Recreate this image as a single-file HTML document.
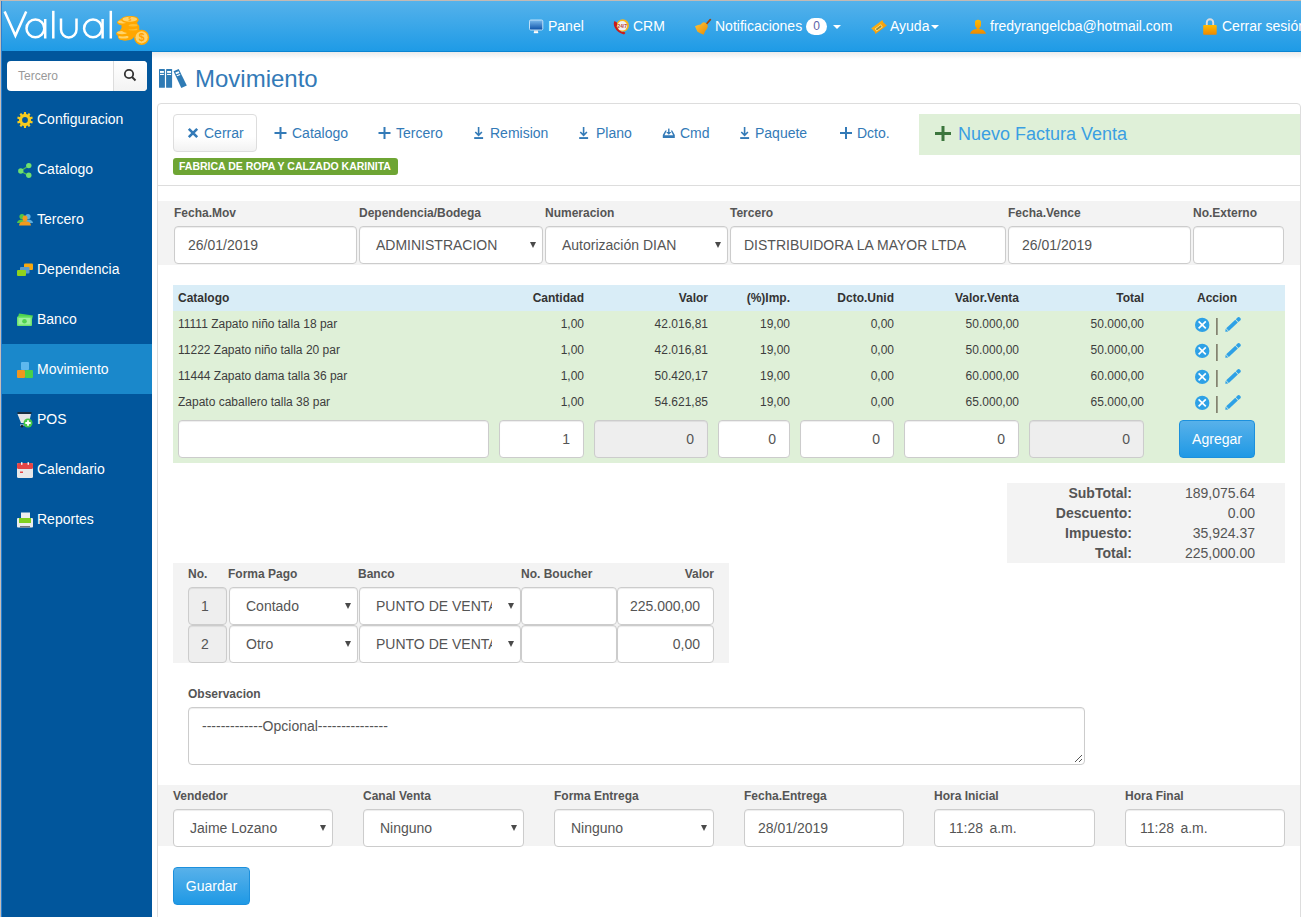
<!DOCTYPE html>
<html><head><meta charset="utf-8">
<style>
*{box-sizing:border-box;margin:0;padding:0}
html,body{width:1301px;height:917px;overflow:hidden;background:#fff}
body{position:relative;font-family:"Liberation Sans",sans-serif;color:#333;font-size:14px}
.a{position:absolute}
#hdr{left:0;top:0;width:1301px;height:52px;background:linear-gradient(#55b2eb,#1f9be6);border-top:1px solid #c4bab4;border-bottom:1px solid #0b85d2}
#side{left:2px;top:51px;width:150px;height:866px;background:#01569c}
.nav{position:absolute;top:18px;color:#fff;font-size:14px;white-space:nowrap;line-height:16px}
.si{position:absolute;left:0;width:150px;height:50px;color:#fff;font-size:14px}
.si span{position:absolute;left:35px;top:17px;line-height:16px}
.si svg{position:absolute;left:15px;top:18px}
.lbl{position:absolute;font-size:12px;font-weight:bold;color:#555;line-height:14px;white-space:nowrap}
.inp{position:absolute;height:38px;border:1px solid #ccc;border-radius:4px;background:#fff;font-size:14px;color:#555;line-height:36px;padding-left:13px;white-space:nowrap;overflow:hidden;box-shadow:inset 0 1px 1px rgba(0,0,0,.075)}
.sel:after{content:"";position:absolute;right:6px;top:15px;border-left:3.5px solid transparent;border-right:3.5px solid transparent;border-top:6px solid #4a4a4a}
.r{text-align:right;padding-right:13px;padding-left:0}
.dis{background:#eee}
.tb{position:absolute;top:125px;color:#337ab7;font-size:14px;line-height:16px;white-space:nowrap}
.td{position:absolute;font-size:12px;color:#3d3d3d;line-height:14px;white-space:nowrap}
.th{position:absolute;font-size:12px;font-weight:bold;color:#333;line-height:14px;white-space:nowrap}
</style></head><body>
<!-- header -->
<div id="hdr" class="a"></div>
<div class="a" style="left:0;top:1px;width:1px;height:916px;background:#c8beb8"></div>
<div class="a" style="left:1px;top:1px;width:1px;height:916px;background:#2a80d2"></div>
<!-- logo -->
<svg class="a" style="left:0;top:0" width="152" height="51" viewBox="0 0 152 51">
 <g fill="none" stroke="#fff" stroke-width="2.5">
  <polyline points="4.6,11.5 15.4,35.6 26.2,11.5" stroke-linejoin="miter"/>
  <circle cx="35.4" cy="28.4" r="8.9"/>
  <line x1="45.2" y1="19" x2="45.2" y2="38.5"/>
  <line x1="53.3" y1="10.8" x2="53.3" y2="38.5"/>
  <path d="M61,18.5 V29.5 A7.75,8 0 0 0 76.5,29.5 V18.5"/>
  <circle cx="93" cy="28.4" r="8.9"/>
  <line x1="102.6" y1="19" x2="102.6" y2="38.5"/>
  <line x1="110.8" y1="10.8" x2="110.8" y2="38.5"/>
 </g>
 <g><polygon points="118,37 117,33 120,30.5 121.5,28 121.8,24.5 117,22.5 120,19.5 124,17.5 130,16 137,17 138.6,20 137,23 139.2,26.5 139.4,31 136,35 132,39 125,40.5 119.5,39.5" fill="#ffa700"/><ellipse cx="125.5" cy="37.8" rx="7.3" ry="2.8" fill="#ffa700"/><ellipse cx="123.5" cy="37.0" rx="5" ry="1.5" fill="#ffd36a"/><ellipse cx="122.8" cy="33.5" rx="6.8" ry="3" fill="#ffa700"/><ellipse cx="122.0" cy="32.6" rx="5" ry="1.6" fill="#ffd36a"/><ellipse cx="130.5" cy="30.0" rx="8.8" ry="3.2" fill="#ffa700"/><ellipse cx="133.0" cy="29.3" rx="4.5" ry="1.2" fill="#ffbf30"/><ellipse cx="130.5" cy="26.2" rx="8.8" ry="3.2" fill="#ffa700"/><ellipse cx="133.0" cy="25.3" rx="4.5" ry="1.2" fill="#ffbf30"/><ellipse cx="124.3" cy="22.5" rx="7.2" ry="3.2" fill="#ffa700"/><ellipse cx="122.5" cy="21.8" rx="4.5" ry="1.6" fill="#ffd36a"/><ellipse cx="129.8" cy="19.6" rx="8.8" ry="3.6" fill="#ffa700"/><ellipse cx="129.8" cy="19.2" rx="7.3" ry="2.5" fill="#ffd36a"/><circle cx="141.6" cy="37.3" r="7.6" fill="#ffa700"/><circle cx="141.6" cy="37.3" r="6.1" fill="#ffd36a"/><text x="141.6" y="41.2" font-size="10.5" font-weight="bold" fill="#ffa000" text-anchor="middle" font-family="Liberation Sans">$</text><text x="129.8" y="21.3" font-size="5" font-weight="bold" fill="#ffa000" text-anchor="middle" font-family="Liberation Sans">$</text></g>
</svg>
<!-- nav -->
<svg class="a" style="left:525px;top:14px" width="22" height="24" viewBox="0 0 22 24"><defs><linearGradient id="scr" x1="0" y1="0" x2="0" y2="1"><stop offset="0" stop-color="#7cbcef"/><stop offset="1" stop-color="#0a4ea6"/></linearGradient></defs><rect x="4.5" y="6" width="13.3" height="10" rx="1.2" fill="url(#scr)" stroke="#bfe0f8" stroke-width="1"/><rect x="9" y="16.5" width="4" height="1.8" fill="#e8e8e8"/><rect x="8.8" y="18" width="4.4" height="1.2" fill="#fff"/></svg>
<div class="nav" style="left:548px">Panel</div>
<svg class="a" style="left:608px;top:14px" width="26" height="24" viewBox="0 0 26 24"><circle cx="14.7" cy="11.5" r="6.2" fill="#f7b51a"/><circle cx="14.3" cy="11.8" r="4.8" fill="#eef2f6"/><text x="14.2" y="13.6" font-size="4.8" font-weight="bold" fill="#c0392b" text-anchor="middle" font-family="Liberation Sans">24/7</text><path d="M6.5,7 Q5,9 6.5,13 Q9,18.5 16,20.5 L17.5,19 Q16,17 14,18 Q10,16 8.5,12.5 Q9.5,10.5 9,8.5 Z" fill="#cc1a1a"/></svg>
<div class="nav" style="left:633px">CRM</div>
<svg class="a" style="left:690px;top:14px" width="26" height="24" viewBox="0 0 26 24"><defs><linearGradient id="bel" x1="0" y1="0" x2="1" y2="1"><stop offset="0" stop-color="#ffc53a"/><stop offset="1" stop-color="#e78a00"/></linearGradient></defs><path d="M16.5,10 L20.3,5.6" stroke="#9b4510" stroke-width="1.8" stroke-linecap="round"/><path d="M5,12.3 Q8,10.5 10.8,10.5 Q12.5,8 14.2,8.3 Q17.5,9.5 17.8,12.5 Q17.5,15 15.2,17 Q14.5,19 13.7,20.7 Q10,19.5 7.5,17.8 Q6,15 5,12.3Z" fill="url(#bel)"/></svg>
<div class="nav" style="left:715px">Notificaciones</div>
<div class="a" style="left:806px;top:18px;width:21px;height:17px;border-radius:9px;background:#fff;color:#5b62a8;font-size:12px;text-align:center;line-height:17px">0</div>
<div class="a" style="left:833px;top:25px;border-left:4px solid transparent;border-right:4px solid transparent;border-top:4px solid #fff"></div>
<svg class="a" style="left:866px;top:14px" width="26" height="24" viewBox="0 0 26 24"><defs><linearGradient id="tkt" x1="0" y1="0" x2="1" y2="1"><stop offset="0" stop-color="#ffbe1a"/><stop offset="1" stop-color="#f08c00"/></linearGradient></defs><path d="M5.1,14.5 L16.5,5.9 Q16.6,8.2 18.3,9.2 Q19.5,10.8 20.9,11.4 L9.4,19.9 Q9.3,17.8 7.5,16.7 Q6.5,15 5.1,14.5Z" fill="url(#tkt)"/><path d="M8.7,14.8 L14.8,10.2 L16.8,13 L10.7,17.6Z" fill="#ffe680"/><path d="M9.8,14.9 L14.6,11.3 L15.7,12.8 L10.9,16.4Z" fill="#9c8a3a"/></svg>
<div class="nav" style="left:890px">Ayuda</div>
<div class="a" style="left:931px;top:25px;border-left:4.5px solid transparent;border-right:4.5px solid transparent;border-top:4px solid #fff"></div>
<svg class="a" style="left:966px;top:12px" width="24" height="26" viewBox="0 0 24 26"><defs><linearGradient id="usr" x1="0" y1="0" x2="0" y2="1"><stop offset="0" stop-color="#ffbb00"/><stop offset="1" stop-color="#ee8a00"/></linearGradient></defs><path d="M9,10.5 Q8.8,7.8 12,7.8 Q15.2,7.8 15,10.5 L15,13.5 Q14.5,15.3 13.3,16.2 L13.3,17 Q19,17.5 20,21.8 L4,21.8 Q5,17.5 10.7,17 L10.7,16.2 Q9.5,15.3 9,13.5Z" fill="url(#usr)"/></svg>
<div class="nav" style="left:990px">fredyrangelcba@hotmail.com</div>
<svg class="a" style="left:1198px;top:12px" width="24" height="26" viewBox="0 0 24 26"><defs><linearGradient id="lck" x1="0" y1="0" x2="0" y2="1"><stop offset="0" stop-color="#ffbb00"/><stop offset="1" stop-color="#ee8800"/></linearGradient></defs><path d="M8.8,13.5 V10.5 A3.2,3.2 0 0 1 15.2,10.5 V13.5" fill="none" stroke="#dcdcdc" stroke-width="1.9"/><rect x="5.2" y="13" width="13.5" height="9.8" rx="0.8" fill="url(#lck)"/></svg>
<div class="nav" style="left:1222px">Cerrar sesión</div>

<!-- sidebar -->
<div id="side" class="a"></div>
<div class="a" style="left:7px;top:61px;width:140px;height:30px;background:#fff;border-radius:4px"></div>
<div class="a" style="left:113px;top:61px;width:34px;height:30px;border-left:1px solid #ddd;border-radius:0 4px 4px 0;background:linear-gradient(#fff,#f3f3f3)"></div>
<div class="a" style="left:18px;top:69px;font-size:12px;color:#999;line-height:14px">Tercero</div>
<svg class="a" style="left:123px;top:68px" width="14" height="14" viewBox="0 0 14 14"><circle cx="6" cy="6" r="4.2" fill="none" stroke="#333" stroke-width="1.8"/><line x1="9" y1="9" x2="12.5" y2="12.5" stroke="#333" stroke-width="2"/></svg>

<div class="a" style="left:2px;top:94px;width:150px;height:500px">
 <div class="si" style="top:0"><svg width="16" height="16" viewBox="0 0 16 16"><path fill="#f6cb1e" d="M6.80,2.12 L7.00,0.06 L9.00,0.06 L9.20,2.12 L10.49,2.54 L11.85,0.99 L13.48,2.17 L12.43,3.95 L13.22,5.04 L15.24,4.59 L15.86,6.50 L13.96,7.32 L13.96,8.68 L15.86,9.50 L15.24,11.41 L13.22,10.96 L12.43,12.05 L13.48,13.83 L11.85,15.01 L10.49,13.46 L9.20,13.88 L9.00,15.94 L7.00,15.94 L6.80,13.88 L5.51,13.46 L4.15,15.01 L2.52,13.83 L3.57,12.05 L2.78,10.96 L0.76,11.41 L0.14,9.50 L2.04,8.68 L2.04,7.32 L0.14,6.50 L0.76,4.59 L2.78,5.04 L3.57,3.95 L2.52,2.17 L4.15,0.99 L5.51,2.54Z"/><circle cx="8" cy="8" r="2.9" fill="#01569c"/></svg><span>Configuracion</span></div>
 <div class="si" style="top:50px"><svg width="16" height="16" viewBox="0 0 16 16"><path d="M3.5,9 L11.5,4 M3.5,9 L11.5,13.5" stroke="#4cc24c" stroke-width="1.2"/><circle cx="3.8" cy="9" r="2.7" fill="#6ee06e"/><circle cx="11.8" cy="3.6" r="2.7" fill="#6ee06e"/><circle cx="11.8" cy="13.3" r="2.7" fill="#6ee06e"/></svg><span>Catalogo</span></div>
 <div class="si" style="top:100px"><svg width="16" height="17" viewBox="0 -1 16 17"><circle cx="5" cy="3.5" r="2.6" fill="#52c447"/><path d="M0,10 Q0.5,6.5 5,6.5 Q8,6.5 8,10Z" fill="#52c447"/><circle cx="11" cy="3.5" r="2.6" fill="#5aaee0"/><path d="M8,10 Q8,6.5 11,6.5 Q15.5,6.5 16,10Z" fill="#5aaee0"/><ellipse cx="8" cy="5.5" rx="2.5" ry="3" fill="#f39a1e"/><path d="M2,12.5 Q2.5,8.3 8,8.3 Q13.5,8.3 14,12.5Z" fill="#f39a1e"/></svg><span>Tercero</span></div>
 <div class="si" style="top:150px"><svg width="16" height="17" viewBox="0 -1.5 16 17"><rect x="7" y="0" width="9" height="6.5" rx="1" fill="#f8a80f"/><rect x="3" y="3.5" width="9.5" height="6.5" rx="1" fill="#5a9ccc"/><rect x="0" y="6.5" width="9" height="6" rx="1" fill="#8fd21c"/></svg><span>Dependencia</span></div>
 <div class="si" style="top:200px"><svg width="16" height="17" viewBox="0 -1.5 16 17"><path d="M1,3.5 L2,0 L16,2 L15,6Z" fill="#4fd34f"/><rect x="0" y="3" width="15" height="9.5" rx="1" fill="#6ee46e"/><rect x="1.5" y="4.5" width="12" height="6.5" fill="#9ef09e"/><circle cx="7.5" cy="7.7" r="2.3" fill="#4fd34f"/></svg><span>Banco</span></div>
 <div class="si" style="top:250px;background:#1a88cb"><svg width="16" height="16" viewBox="0 0 16 16"><rect x="4" y="0" width="8" height="8" rx="1" fill="#5eb8ee"/><rect x="0" y="8" width="8" height="8" rx="1" fill="#f0961e"/><rect x="8" y="8" width="8" height="8" rx="1" fill="#49d049"/></svg><span>Movimiento</span></div>
 <div class="si" style="top:300px"><svg width="16" height="16" viewBox="0 0 16 16"><path d="M0.5,1 H14.5" stroke="#222" stroke-width="1.5"/><path d="M0.5,2 H14 L12,11 H4 Z" fill="#e6e6e6"/><path d="M3,13 H8" stroke="#ddd" stroke-width="1"/><circle cx="5" cy="14.3" r="1.2" fill="#222"/><circle cx="11" cy="11" r="4.5" fill="#47c947"/><path d="M11,8.3v5.4M8.3,11h5.4" stroke="#fff" stroke-width="1.8"/></svg><span>POS</span></div>
 <div class="si" style="top:350px"><svg width="16" height="16" viewBox="0 0 16 16"><rect x="0" y="1" width="16" height="15" rx="1.5" fill="#e8e8e8"/><rect x="0" y="1" width="16" height="6" rx="1.5" fill="#e64545"/><rect x="4" y="0" width="1.5" height="3" rx=".7" fill="#f4f4f4"/><rect x="10.5" y="0" width="1.5" height="3" rx=".7" fill="#f4f4f4"/><rect x="3" y="9.5" width="3" height="1.5" fill="#e64545"/></svg><span>Calendario</span></div>
 <div class="si" style="top:400px"><svg width="16" height="16" viewBox="0 0 16 16"><rect x="4" y="0.5" width="9" height="7" fill="#eee"/><rect x="0" y="6" width="16" height="9.5" rx="1" fill="#ececec"/><rect x="2" y="6" width="12" height="5" fill="#7fd01f"/><rect x="3" y="14" width="10" height="1.5" fill="#777"/></svg><span>Reportes</span></div>
</div>

<!-- content top shadow -->
<div class="a" style="left:152px;top:52px;width:1149px;height:7px;background:linear-gradient(#ebebeb,#fff)"></div>

<!-- title -->
<svg class="a" style="left:155px;top:64px" width="36" height="28" viewBox="0 0 36 28"><rect x="4" y="4.9" width="5.9" height="18.9" rx=".6" fill="#2f7bb5"/><rect x="11.1" y="4.9" width="6" height="18.9" rx=".6" fill="#2f7bb5"/><rect x="5" y="7" width="3.9" height="1.9" fill="#fff"/><rect x="5" y="9.9" width="3.9" height="1.1" fill="#fff"/><rect x="12.1" y="7" width="4" height="1.9" fill="#fff"/><rect x="12.1" y="9.9" width="4" height="1.1" fill="#fff"/><polygon points="18.5,7.2 23.7,5 31.8,21.4 26.3,24" fill="#2f7bb5"/><polygon points="20.28,8.61 23.64,7.19 24.46,8.9 21.1,10.32" fill="#fff"/><polygon points="21.57,11.31 24.93,9.89 25.4,10.88 22.04,12.3" fill="#fff"/></svg>
<div class="a" style="left:195px;top:65px;font-size:24px;color:#337ab7;line-height:28px">Movimiento</div>

<!-- panel -->
<div class="a" style="left:157px;top:103px;width:1144px;height:830px;border:1px solid #ddd;border-radius:4px"></div>
<div class="a" style="left:158px;top:185px;width:1142px;height:1px;background:#ddd"></div>

<!-- toolbar -->
<div class="a" style="left:173px;top:114px;width:84px;height:38px;border:1px solid #ddd;border-radius:4px;background:linear-gradient(#fff 60%,#f2f2f2)"></div>
<svg class="a" style="left:187px;top:127px" width="12" height="12" viewBox="0 0 12 12"><path d="M1.8,1.8 L10.2,10.2 M10.2,1.8 L1.8,10.2" stroke="#337ab7" stroke-width="2.6"/></svg>
<div class="tb" style="left:204px">Cerrar</div>
<svg class="a" style="left:274px;top:127px" width="13" height="12" viewBox="0 0 13 12"><path d="M6.5,0 V12 M0.5,6 H12.5" stroke="#337ab7" stroke-width="2"/></svg>
<div class="tb" style="left:292px">Catalogo</div>
<svg class="a" style="left:378px;top:127px" width="13" height="12" viewBox="0 0 13 12"><path d="M6.5,0 V12 M0.5,6 H12.5" stroke="#337ab7" stroke-width="2"/></svg>
<div class="tb" style="left:396px">Tercero</div>
<svg class="a" style="left:474px;top:127px" width="10" height="13" viewBox="0 0 10 13"><path d="M4.6,0 V8.5 M1.3,5 L4.6,8.3 L7.9,5" stroke="#337ab7" stroke-width="1.6" fill="none"/><rect x="0.2" y="10.1" width="8.9" height="1.9" fill="#337ab7"/></svg>
<div class="tb" style="left:490px">Remision</div>
<svg class="a" style="left:579px;top:127px" width="10" height="13" viewBox="0 0 10 13"><path d="M4.6,0 V8.5 M1.3,5 L4.6,8.3 L7.9,5" stroke="#337ab7" stroke-width="1.6" fill="none"/><rect x="0.2" y="10.1" width="8.9" height="1.9" fill="#337ab7"/></svg>
<div class="tb" style="left:596px">Plano</div>
<svg class="a" style="left:660px;top:126px" width="16" height="14" viewBox="0 0 16 14"><polygon points="2.8,12 2.8,9 5.4,4.6 6.8,4.6 4.5,9.2 13.1,9.2 10.8,4.6 12.2,4.6 14.8,9 14.8,12" fill="#337ab7"/><rect x="8.1" y="2.6" width="1.4" height="4" fill="#337ab7"/><polygon points="6.1,6 11.5,6 8.8,8.8" fill="#337ab7"/></svg>
<div class="tb" style="left:680px">Cmd</div>
<svg class="a" style="left:740px;top:127px" width="10" height="13" viewBox="0 0 10 13"><path d="M4.6,0 V8.5 M1.3,5 L4.6,8.3 L7.9,5" stroke="#337ab7" stroke-width="1.6" fill="none"/><rect x="0.2" y="10.1" width="8.9" height="1.9" fill="#337ab7"/></svg>
<div class="tb" style="left:755px">Paquete</div>
<svg class="a" style="left:840px;top:127px" width="12" height="12" viewBox="0 0 12 12"><path d="M6,0 V12 M0,6 H12" stroke="#337ab7" stroke-width="2"/></svg>
<div class="tb" style="left:857px">Dcto.</div>
<div class="a" style="left:919px;top:114px;width:381px;height:41px;background:#dff0d8"></div>
<svg class="a" style="left:935px;top:126px" width="16" height="15" viewBox="0 0 16 15"><path d="M8,0 V15 M0,7.5 H16" stroke="#3c763d" stroke-width="3"/></svg>
<div class="a" style="left:958px;top:124px;font-size:18px;color:#3a9fe2;line-height:21px;white-space:nowrap">Nuevo Factura Venta</div>
<div class="a" style="left:173px;top:158px;width:225px;height:17px;background:#6ea534;border-radius:3px;color:#fff;font-size:10.5px;font-weight:bold;line-height:17px;padding-left:6px;white-space:nowrap">FABRICA DE ROPA Y CALZADO KARINITA</div>

<!-- form row 1 -->
<div class="a" style="left:158px;top:201px;width:1142px;height:64px;background:#f3f3f3"></div>
<div class="lbl" style="left:174px;top:206px">Fecha.Mov</div>
<div class="lbl" style="left:359px;top:206px">Dependencia/Bodega</div>
<div class="lbl" style="left:545px;top:206px">Numeracion</div>
<div class="lbl" style="left:730px;top:206px">Tercero</div>
<div class="lbl" style="left:1008px;top:206px">Fecha.Vence</div>
<div class="lbl" style="left:1193px;top:206px">No.Externo</div>
<div class="inp" style="left:174px;top:226px;width:183px">26/01/2019</div>
<div class="inp sel" style="left:359px;top:226px;width:184px;padding-left:16px">ADMINISTRACION</div>
<div class="inp sel" style="left:545px;top:226px;width:183px;padding-left:16px">Autorización DIAN</div>
<div class="inp" style="left:730px;top:226px;width:276px">DISTRIBUIDORA LA MAYOR LTDA</div>
<div class="inp" style="left:1008px;top:226px;width:183px">26/01/2019</div>
<div class="inp" style="left:1193px;top:226px;width:91px"></div>

<!-- items table -->
<div class="a" style="left:173px;top:285px;width:1112px;height:26px;background:#d9edf7"></div>
<div class="a" style="left:173px;top:311px;width:1112px;height:152px;background:#dff0d8"></div>
<div class="th" style="left:178px;top:291px">Catalogo</div>
<div class="th" style="right:717px;top:291px">Cantidad</div>
<div class="th" style="right:593px;top:291px">Valor</div>
<div class="th" style="right:511px;top:291px">(%)Imp.</div>
<div class="th" style="right:407px;top:291px">Dcto.Unid</div>
<div class="th" style="right:282px;top:291px">Valor.Venta</div>
<div class="th" style="right:157px;top:291px">Total</div>
<div class="th" style="left:1149px;width:136px;text-align:center;top:291px">Accion</div>

<div class="td" style="left:178px;top:317px">11111 Zapato niño talla 18 par</div>
<div class="td" style="right:717px;top:317px">1,00</div>
<div class="td" style="right:593px;top:317px">42.016,81</div>
<div class="td" style="right:511px;top:317px">19,00</div>
<div class="td" style="right:407px;top:317px">0,00</div>
<div class="td" style="right:282px;top:317px">50.000,00</div>
<div class="td" style="right:157px;top:317px">50.000,00</div>
<svg class="a" style="left:1194px;top:317px" width="50" height="20" viewBox="0 0 50 20"><circle cx="8.2" cy="7.9" r="7.2" fill="#2ea1e6"/><path d="M4.6,4.4 L11.8,11.4 M11.8,4.4 L4.6,11.4" stroke="#fff" stroke-width="1.7"/><rect x="22.2" y="1" width="1.4" height="17" fill="#6f6a58"/><polygon points="31.30,14.70 34.28,14.52 31.69,11.74" fill="#2ea1e6"/><polygon points="34.79,14.04 43.86,5.59 41.27,2.81 32.20,11.26" fill="#2ea1e6"/><polygon points="44.37,5.11 46.74,2.90 46.71,1.56 45.49,0.24 44.15,0.12 41.78,2.33" fill="#2ea1e6"/></svg>
<div class="td" style="left:178px;top:343px">11222 Zapato niño talla 20 par</div>
<div class="td" style="right:717px;top:343px">1,00</div>
<div class="td" style="right:593px;top:343px">42.016,81</div>
<div class="td" style="right:511px;top:343px">19,00</div>
<div class="td" style="right:407px;top:343px">0,00</div>
<div class="td" style="right:282px;top:343px">50.000,00</div>
<div class="td" style="right:157px;top:343px">50.000,00</div>
<svg class="a" style="left:1194px;top:343px" width="50" height="20" viewBox="0 0 50 20"><circle cx="8.2" cy="7.9" r="7.2" fill="#2ea1e6"/><path d="M4.6,4.4 L11.8,11.4 M11.8,4.4 L4.6,11.4" stroke="#fff" stroke-width="1.7"/><rect x="22.2" y="1" width="1.4" height="17" fill="#6f6a58"/><polygon points="31.30,14.70 34.28,14.52 31.69,11.74" fill="#2ea1e6"/><polygon points="34.79,14.04 43.86,5.59 41.27,2.81 32.20,11.26" fill="#2ea1e6"/><polygon points="44.37,5.11 46.74,2.90 46.71,1.56 45.49,0.24 44.15,0.12 41.78,2.33" fill="#2ea1e6"/></svg>
<div class="td" style="left:178px;top:369px">11444 Zapato dama talla 36 par</div>
<div class="td" style="right:717px;top:369px">1,00</div>
<div class="td" style="right:593px;top:369px">50.420,17</div>
<div class="td" style="right:511px;top:369px">19,00</div>
<div class="td" style="right:407px;top:369px">0,00</div>
<div class="td" style="right:282px;top:369px">60.000,00</div>
<div class="td" style="right:157px;top:369px">60.000,00</div>
<svg class="a" style="left:1194px;top:369px" width="50" height="20" viewBox="0 0 50 20"><circle cx="8.2" cy="7.9" r="7.2" fill="#2ea1e6"/><path d="M4.6,4.4 L11.8,11.4 M11.8,4.4 L4.6,11.4" stroke="#fff" stroke-width="1.7"/><rect x="22.2" y="1" width="1.4" height="17" fill="#6f6a58"/><polygon points="31.30,14.70 34.28,14.52 31.69,11.74" fill="#2ea1e6"/><polygon points="34.79,14.04 43.86,5.59 41.27,2.81 32.20,11.26" fill="#2ea1e6"/><polygon points="44.37,5.11 46.74,2.90 46.71,1.56 45.49,0.24 44.15,0.12 41.78,2.33" fill="#2ea1e6"/></svg>
<div class="td" style="left:178px;top:395px">Zapato caballero talla 38 par</div>
<div class="td" style="right:717px;top:395px">1,00</div>
<div class="td" style="right:593px;top:395px">54.621,85</div>
<div class="td" style="right:511px;top:395px">19,00</div>
<div class="td" style="right:407px;top:395px">0,00</div>
<div class="td" style="right:282px;top:395px">65.000,00</div>
<div class="td" style="right:157px;top:395px">65.000,00</div>
<svg class="a" style="left:1194px;top:395px" width="50" height="20" viewBox="0 0 50 20"><circle cx="8.2" cy="7.9" r="7.2" fill="#2ea1e6"/><path d="M4.6,4.4 L11.8,11.4 M11.8,4.4 L4.6,11.4" stroke="#fff" stroke-width="1.7"/><rect x="22.2" y="1" width="1.4" height="17" fill="#6f6a58"/><polygon points="31.30,14.70 34.28,14.52 31.69,11.74" fill="#2ea1e6"/><polygon points="34.79,14.04 43.86,5.59 41.27,2.81 32.20,11.26" fill="#2ea1e6"/><polygon points="44.37,5.11 46.74,2.90 46.71,1.56 45.49,0.24 44.15,0.12 41.78,2.33" fill="#2ea1e6"/></svg>

<div class="inp" style="left:178px;top:420px;width:311px"></div>
<div class="inp r" style="left:499px;top:420px;width:85px">1</div>
<div class="inp r dis" style="left:594px;top:420px;width:114px">0</div>
<div class="inp r" style="left:718px;top:420px;width:72px">0</div>
<div class="inp r" style="left:800px;top:420px;width:94px">0</div>
<div class="inp r" style="left:904px;top:420px;width:115px">0</div>
<div class="inp r dis" style="left:1029px;top:420px;width:115px">0</div>
<div class="a" style="left:1179px;top:420px;width:76px;height:38px;border-radius:4px;background:linear-gradient(#58b1ea,#1f99e5);border:1px solid #1c90dd;color:#fff;font-size:14px;text-align:center;line-height:36px">Agregar</div>

<!-- totals -->
<div class="a" style="left:1007px;top:483px;width:278px;height:80px;background:#f3f3f3"></div>
<div class="a" style="left:1007px;top:483px;width:125px;text-align:right;font-size:14px;font-weight:bold;color:#555;line-height:20px">SubTotal:<br>Descuento:<br>Impuesto:<br>Total:</div>
<div class="a" style="left:1130px;top:483px;width:125px;text-align:right;font-size:14px;color:#555;line-height:20px">189,075.64<br>0.00<br>35,924.37<br>225,000.00</div>

<!-- payments -->
<div class="a" style="left:173px;top:563px;width:556px;height:100px;background:#f3f3f3"></div>
<div class="lbl" style="left:188px;top:567px">No.</div>
<div class="lbl" style="left:228px;top:567px">Forma Pago</div>
<div class="lbl" style="left:358px;top:567px">Banco</div>
<div class="lbl" style="left:521px;top:567px">No. Boucher</div>
<div class="lbl" style="right:587px;top:567px">Valor</div>
<div class="inp dis" style="left:188px;top:587px;width:39px;padding-left:12px">1</div>
<div class="inp sel" style="left:229px;top:587px;width:129px;padding-left:16px">Contado</div>
<div class="inp sel" style="left:359px;top:587px;width:162px;padding-left:16px"><span style="display:inline-block;width:116px;overflow:hidden;vertical-align:top">PUNTO DE VENTA</span></div>
<div class="inp" style="left:521px;top:587px;width:96px"></div>
<div class="inp r" style="left:617px;top:587px;width:97px">225.000,00</div>
<div class="inp dis" style="left:188px;top:625px;width:39px;padding-left:12px">2</div>
<div class="inp sel" style="left:229px;top:625px;width:129px;padding-left:16px">Otro</div>
<div class="inp sel" style="left:359px;top:625px;width:162px;padding-left:16px"><span style="display:inline-block;width:116px;overflow:hidden;vertical-align:top">PUNTO DE VENTA</span></div>
<div class="inp" style="left:521px;top:625px;width:96px"></div>
<div class="inp r" style="left:617px;top:625px;width:97px">0,00</div>

<!-- observacion -->
<div class="lbl" style="left:188px;top:687px">Observacion</div>
<div class="inp" style="left:188px;top:707px;width:897px;height:58px;line-height:20px;padding-top:8px;font-size:14px">-------------Opcional---------------</div>
<svg class="a" style="left:1074px;top:754px" width="9" height="9" viewBox="0 0 9 9"><path d="M1,8 L8,1 M5,8 L8,5" stroke="#555" stroke-width="1"/></svg>

<!-- bottom row -->
<div class="a" style="left:158px;top:785px;width:1142px;height:61px;background:#f3f3f3"></div>
<div class="lbl" style="left:173px;top:789px">Vendedor</div>
<div class="lbl" style="left:363px;top:789px">Canal Venta</div>
<div class="lbl" style="left:554px;top:789px">Forma Entrega</div>
<div class="lbl" style="left:744px;top:789px">Fecha.Entrega</div>
<div class="lbl" style="left:934px;top:789px">Hora Inicial</div>
<div class="lbl" style="left:1125px;top:789px">Hora Final</div>
<div class="inp sel" style="left:173px;top:809px;width:160px;padding-left:16px">Jaime Lozano</div>
<div class="inp sel" style="left:363px;top:809px;width:161px;padding-left:16px">Ninguno</div>
<div class="inp sel" style="left:554px;top:809px;width:160px;padding-left:16px">Ninguno</div>
<div class="inp" style="left:744px;top:809px;width:160px">28/01/2019</div>
<div class="inp" style="left:934px;top:809px;width:161px;padding-left:14px">11:28<span style="margin-left:2.5px"> a.m.</span></div>
<div class="inp" style="left:1125px;top:809px;width:160px;padding-left:14px">11:28<span style="margin-left:2.5px"> a.m.</span></div>

<div class="a" style="left:173px;top:867px;width:77px;height:38px;border-radius:4px;background:linear-gradient(#58b1ea,#1f99e5);border:1px solid #1c90dd;color:#fff;font-size:14px;text-align:center;line-height:36px">Guardar</div>
</body></html>
